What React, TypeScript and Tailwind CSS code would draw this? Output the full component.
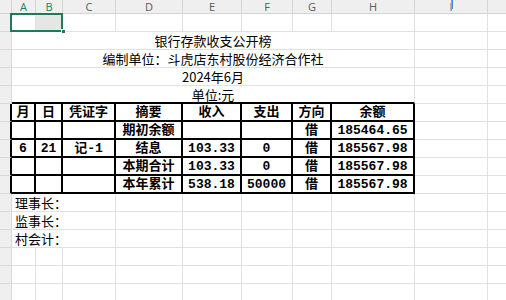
import React from "react";

type Cell = { w: string; t?: string; c?: string };

const cols = [
  "w-[24px]",
  "w-[27px]",
  "w-[53px]",
  "w-[67px]",
  "w-[59px]",
  "w-[51px]",
  "w-[39px]",
  "w-[83px]",
  "w-[73px]",
  "w-[80px]",
];
const letters = ["A", "B", "C", "D", "E", "F", "G", "H", "I", ""];

const grid = "border-r border-b border-[#e1e1e1]";
const blk = "border-r-2 border-b-2 border-black";

const RowHead = ({ black }: { black?: boolean }) => (
  <div
    className={`w-[12px] h-[18px] shrink-0 bg-[#efefef] border-b border-[#d9d9d9] ${
      black ? "border-r-2 border-r-black" : "border-r border-r-[#d9d9d9]"
    }`}
  />
);

const Row = ({ cells, black }: { cells: Cell[]; black?: boolean }) => (
  <div className="flex h-[18px]">
    <RowHead black={black} />
    {cells.map((cell, i) => (
      <div
        key={i}
        className={`${cell.w} h-[18px] shrink-0 flex items-center overflow-visible whitespace-nowrap ${
          cell.c ?? grid
        }`}>
        {cell.t}
      </div>
    ))}
  </div>
);

const tail = (from: number): Cell[] => cols.slice(from).map((w) => ({ w }));

const tableRows = [
  ["月", "日", "凭证字", "摘要", "收入", "支出", "方向", "余额"],
  ["", "", "", "期初余额", "", "", "借", "185464.65"],
  ["6", "21", "记-1", "结息", "103.33", "0", "借", "185567.98"],
  ["", "", "", "本期合计", "103.33", "0", "借", "185567.98"],
  ["", "", "", "本年累计", "538.18", "50000", "借", "185567.98"],
];

const titles = ["银行存款收支公开榜", "编制单位：斗虎店东村股份经济合作社", "2024年6月", "单位:元"];
const signs = ["理事长：", "监事长：", "村会计："];

export default function App() {
  return (
    <div className="relative w-[506px] h-[300px] overflow-hidden bg-white text-black font-['Noto_Sans_CJK_SC',sans-serif]">
      {/* column letters */}
      <div className="flex h-[14px]">
        <div className="w-[12px] h-[14px] shrink-0 bg-[#efefef] border-r border-b border-[#d4d4d4]" />
        {cols.map((w, i) => (
          <div
            key={i}
            className={`${w} h-[14px] shrink-0 flex items-center justify-center bg-[#efefef] border-r border-b border-[#d4d4d4] text-[11px] leading-none font-['Open_Sans',sans-serif] ${
              i < 2 ? "text-[#17806a]" : "text-[#5a5a5a]"
            }`}>
            {letters[i]}
          </div>
        ))}
      </div>

      {/* row 1 with selection */}
      <Row
        cells={[
          { w: cols[0] },
          { w: cols[1], c: `${grid} bg-[#e6e6e6]` },
          ...tail(2),
        ]}
      />

      {/* title block */}
      {titles.map((t, i) => (
        <Row
          key={t}
          cells={[
            {
              w: "w-[403px]",
              t,
              c: `justify-center text-[13px] leading-none ${
                i === 3 ? "border-r border-r-[#e1e1e1] border-b-2 border-b-black" : grid
              }`,
            },
            ...tail(8),
          ]}
        />
      ))}

      {/* ledger table */}
      {tableRows.map((r, ri) => (
        <Row
          key={ri}
          black
          cells={[
            ...r.map((t, ci) => ({
              w: cols[ci],
              t,
              c: `${blk} justify-center text-[13px] leading-none font-bold font-['Liberation_Mono','Noto_Sans_CJK_SC',monospace]`,
            })),
            ...tail(8),
          ]}
        />
      ))}

      {/* signatures */}
      {signs.map((t) => (
        <Row
          key={t}
          cells={[
            { w: "w-[104px]", t, c: `${grid} pl-[3px] text-[13px] leading-none` },
            ...tail(3),
          ]}
        />
      ))}

      {[0, 1, 2].map((k) => (
        <Row key={k} cells={tail(0)} />
      ))}

      {/* active cell frame + fill handle */}
      <div className="absolute left-[10px] top-[13px] w-[53px] h-[19px] border-2 border-[#1e7b55]" />
      <div className="absolute left-[61px] top-[29px] w-[5px] h-[5px] bg-[#1e7b55] border border-white" />

      {/* mouse caret in header */}
      <div className="absolute left-[451px] top-0 flex h-[9px]">
        <div className="w-px h-full bg-[#e0913c]" />
        <div className="w-px h-full bg-[#3b8fd8]" />
      </div>
    </div>
  );
}
